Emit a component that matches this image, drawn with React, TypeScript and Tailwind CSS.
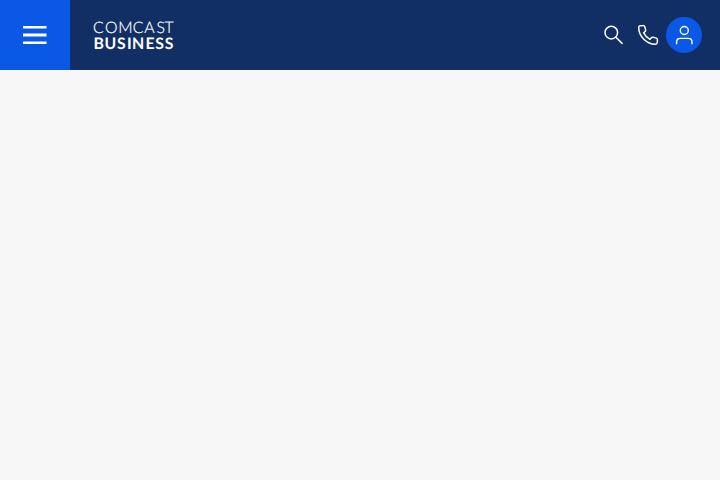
function Logo() {
  return (
    <svg width="82" height="30" viewBox="93 20 82 30" role="img" fill="#fff" className="overflow-visible" textRendering="geometricPrecision">
      <text y="32.5" x="93 105 118.2 132.8 144.2 156.500 164.600" fontFamily="Lato, sans-serif" fontWeight="300" fontSize="15.8" stroke="#fff" strokeWidth="0.2">COMCAST</text>
      <text y="48.5" x="93.5 104.600 117 127 131.900 145.600 155.300 164.700" fontFamily="Lato, sans-serif" fontWeight="700" fontSize="15.8">BUSINESS</text>
    </svg>
  );
}

export default function App() {
  return (
    <div className="h-[480px] w-[720px] bg-[#f7f7f7]">
      <header className="flex h-[70px] items-center bg-[#112f64]">
        <button aria-label="Menu" className="flex size-[70px] items-center justify-center bg-[#0b58e6]">
          <svg width="24" height="18" viewBox="0 0 24 18" fill="#fff">
            <path d="M0 0h23.5v2.4H0zM0 7.5h23.5v3H0zM0 15.6h23.5V18H0z" />
          </svg>
        </button>
        <div className="ml-[23px]">
          <Logo />
        </div>
        <div className="mr-[18px] ml-auto flex items-center">
          <button aria-label="Search" className="flex h-9 w-[34px] items-center justify-center">
            <svg width="24" height="24" viewBox="0 0 24 24" fill="none" stroke="#fff" strokeWidth="1.5" strokeLinecap="round">
              <circle cx="10.3" cy="9.6" r="6.3" />
              <path d="m14.9 14.2 6.2 6.2" />
            </svg>
          </button>
          <button aria-label="Call" className="flex h-9 w-9 items-center justify-center">
            <svg width="24" height="24" viewBox="0 0 24 24" fill="none" stroke="#fff" strokeWidth="1.5" strokeLinejoin="round">
              <path d="M4.3 2.8 7 2.6c.9-.1 1.500.300 1.800 1.100l.8 2.900c.2.8 0 1.400-.5 1.900L7.700 9.900c1.300 2.800 3.300 4.900 6.300 6.400l1.400-1.500c.500-.5 1.100-.7 1.900-.5l3 .8c.8.300 1.200.9 1.100 1.700l-.1 2.700c-.1 1.100-.8 1.800-2 1.800C10.900 21.300 2.700 13.500 2.700 4.500c0-1 .5-1.600 1.600-1.700Z" />
            </svg>
          </button>
          <button aria-label="Account" className="flex size-9 items-center justify-center rounded-full bg-[#0b58e6]">
            <svg width="24" height="24" viewBox="0 0 24 24" fill="none" stroke="#fff" strokeWidth="1.4" strokeLinecap="round">
              <circle cx="12.300" cy="7.500" r="4" />
              <path d="M4.600 20.700v-1.700c0-2.200 1.600-3.600 3.700-3.600h8c2.100 0 3.700 1.400 3.700 3.600v1.700" />
            </svg>
          </button>
        </div>
      </header>
      <main className="h-[410px]" />
    </div>
  );
}
